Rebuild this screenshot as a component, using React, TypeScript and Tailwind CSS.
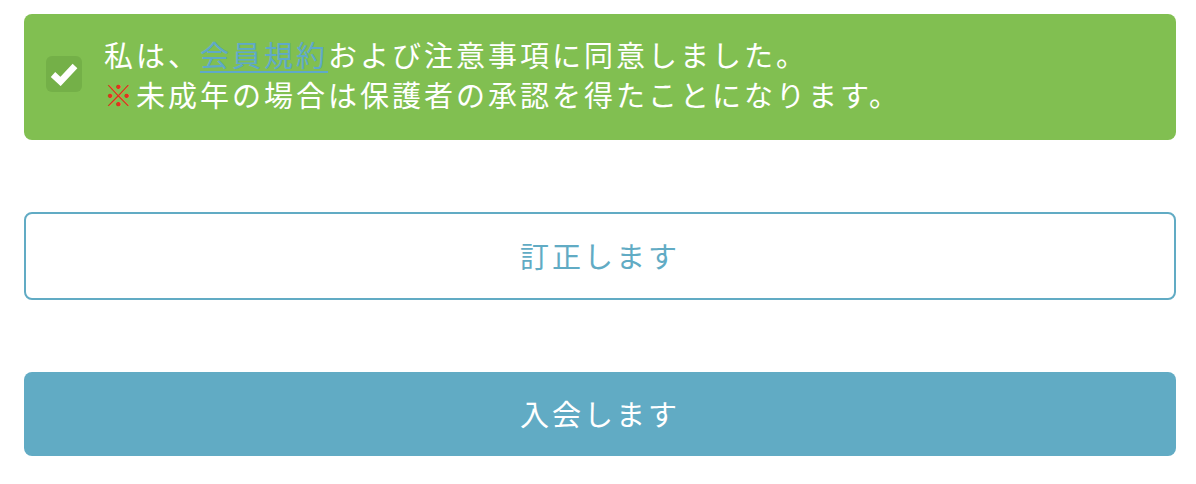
const font = { fontFamily: '"Noto Sans CJK JP", "Noto Sans", sans-serif' }

function CheckMark() {
    return (
        <svg width="28" height="24" viewBox="0 0 28 24" fill="none">
            <polyline points="3,12.5 10.5,19.5 25,4" stroke="white" strokeWidth="6.5" strokeLinejoin="miter" />
        </svg>
    )
}

export default function App() {
    return (
        <div className="w-[1196px] h-[484px] bg-white pl-[24px] pr-[20px] pt-[14px]" style={font}>
            {/* agreement box */}
            <div className="flex items-center gap-[22px] rounded-[8px] bg-[#81bf51] pl-[22px] pt-[20px] pb-[26px] h-[126px]">
                <div className="flex h-[36px] w-[36px] shrink-0 items-center justify-center rounded-[6px] bg-[#74b048]">
                    <CheckMark />
                </div>
                <p className="text-[29px] leading-[40px] tracking-[3px] text-white">
                    私は、<a href="#" className="text-[#5fa9c8] underline underline-offset-[4px]">会員規約</a>および注意事項に同意しました。
                    <br />
                    <span className="text-[#e8301e]">※</span>未成年の場合は保護者の承認を得たことになります。
                </p>
            </div>

            {/* buttons */}
            <button className="mt-[72px] flex h-[88px] w-full items-center justify-center rounded-[8px] border-2 border-[#61abc4] bg-white text-[29px] tracking-[3px] text-[#61abc4]">
                訂正します
            </button>
            <button className="mt-[72px] flex h-[84px] w-full items-center justify-center rounded-[8px] bg-[#61abc4] text-[29px] tracking-[3px] text-white">
                入会します
            </button>
        </div>
    )
}
